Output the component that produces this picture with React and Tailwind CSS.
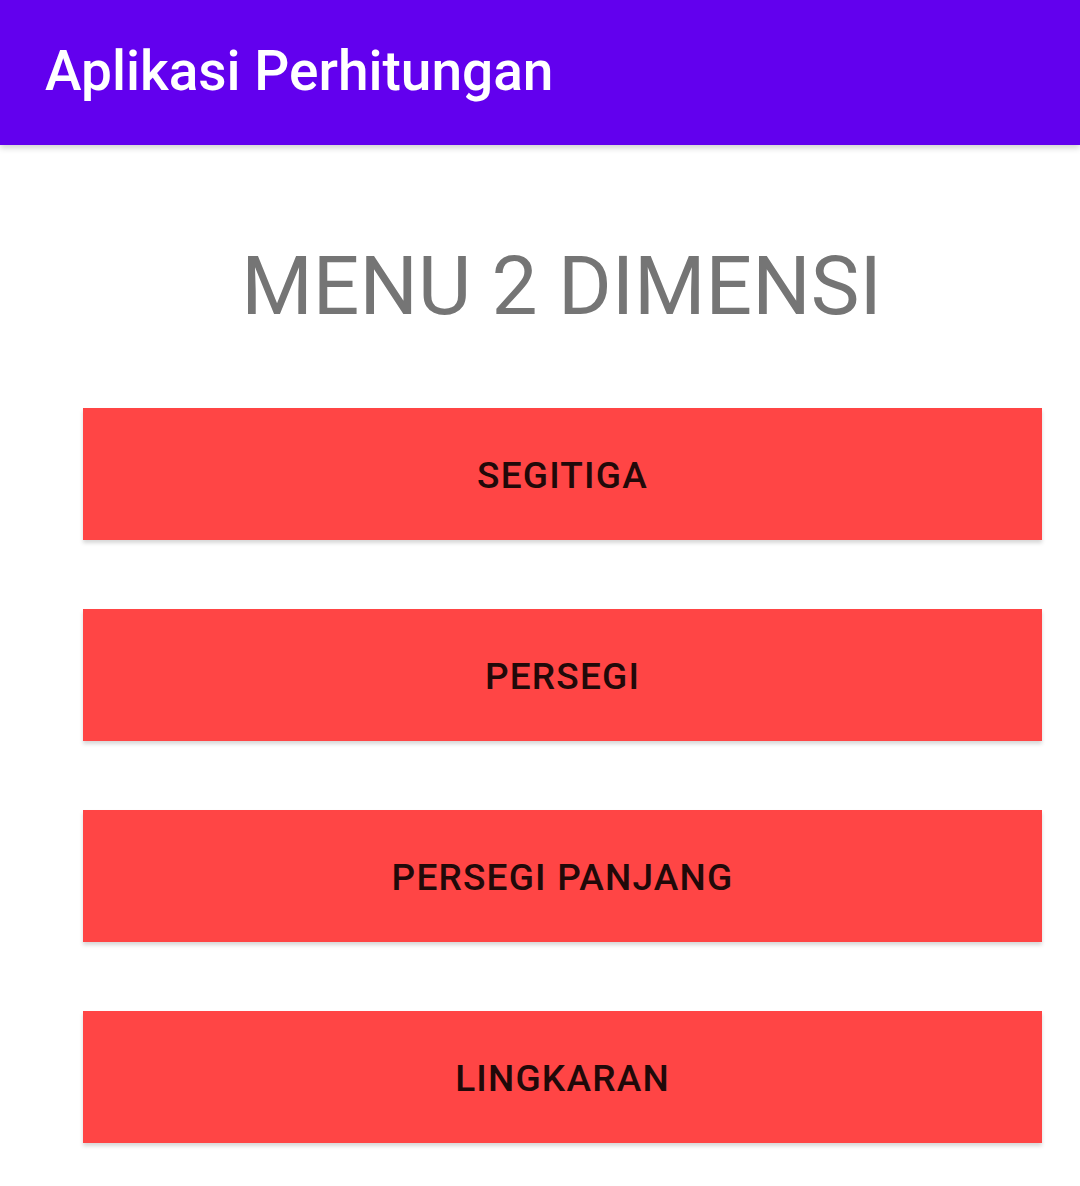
const items = ['SEGITIGA', 'PERSEGI', 'PERSEGI PANJANG', 'LINGKARAN']

export default function App() {
  return (
    <div className="w-[1080px] h-[1186px] bg-white overflow-hidden font-['Roboto',sans-serif]">
      {/* App bar */}
      <div className="relative z-10 h-[145px] bg-[#6200ee] flex items-center pl-[45px] shadow-[0_3px_6px_rgba(0,0,0,0.18)]">
        <h1 className="text-white text-[55px] font-medium leading-none -mt-[2px]">Aplikasi Perhitungan</h1>
      </div>

      <div className="flex flex-col items-center">
        <h2 className="mt-[100px] ml-[43px] text-[#757575] text-[82px] leading-none">MENU 2 DIMENSI</h2>

        <div className="mt-[81px] w-full pl-[83px] pr-[38px] flex flex-col gap-[69px]">
          {items.map((label) => (
            <button
              key={label}
              className="h-[132px] w-full pt-[3px] bg-[#ff4545] text-[#210909] text-[37px] font-medium tracking-[1.2px] shadow-[0_3px_4px_rgba(0,0,0,0.16)]"
            >
              {label}
            </button>
          ))}
        </div>
      </div>
    </div>
  )
}
